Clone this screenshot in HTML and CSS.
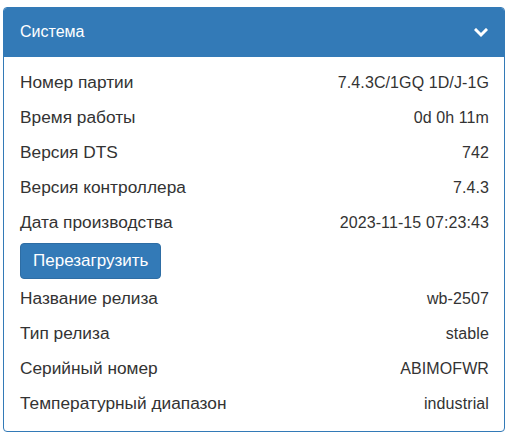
FILE: index.html
```html
<!DOCTYPE html>
<html>
<head>
<meta charset="utf-8">
<link rel="stylesheet" href="styles.css">
</head>
<body>
<div class="page">
  <div class="panel">
    <div class="panel-heading">
      <span class="panel-title">Система</span>
      <svg class="chevron" width="14" height="10" viewBox="0 0 14 10"><path d="M2 2 L7 7 L12 2" fill="none" stroke="#fff" stroke-width="3" stroke-linecap="square"/></svg>
    </div>
    <div class="panel-body">
      <div class="row"><span class="label">Номер партии</span><span class="value">7.4.3C/1GQ 1D/J-1G</span></div>
      <div class="row"><span class="label">Время работы</span><span class="value">0d 0h 11m</span></div>
      <div class="row"><span class="label">Версия DTS</span><span class="value">742</span></div>
      <div class="row"><span class="label">Версия контроллера</span><span class="value">7.4.3</span></div>
      <div class="row"><span class="label">Дата производства</span><span class="value">2023-11-15 07:23:43</span></div>
      <div class="btn-row"><button class="btn">Перезагрузить</button></div>
      <div class="row"><span class="label">Название релиза</span><span class="value">wb-2507</span></div>
      <div class="row"><span class="label">Тип релиза</span><span class="value">stable</span></div>
      <div class="row"><span class="label">Серийный номер</span><span class="value">ABIMOFWR</span></div>
      <div class="row"><span class="label">Температурный диапазон</span><span class="value">industrial</span></div>
    </div>
  </div>
</div>
</body>
</html>
```
FILE: styles.css
```css
html, body {
  margin: 0;
  padding: 0;
  background: #fff;
}
body {
  font-family: "Liberation Sans", Arial, sans-serif;
  font-size: 16px;
  color: #333;
}
.page {
  padding: 7px 5px 0 3px;
}
.panel {
  border: 1px solid #337ab7;
  border-radius: 4px;
  overflow: hidden;
}
.panel-heading {
  background: #337ab7;
  color: #fff;
  height: 49px;
  display: flex;
  align-items: center;
  justify-content: space-between;
  padding: 0 16px 0 16px;
}
.panel-title {
  font-size: 16px;
  margin-top: -1px;
}
.panel-body {
  padding: 8px 15px 10px 16px;
}
.row {
  display: flex;
  justify-content: space-between;
  align-items: center;
  height: 35px;
}
.label {
  font-size: 17.3px;
}
.value {
  font-size: 16px;
  letter-spacing: 0.1px;
}
.btn-row {
  padding: 3px 0 2px 0;
}
.btn {
  font-family: "Liberation Sans", Arial, sans-serif;
  font-size: 17px;
  color: #fff;
  background: #337ab7;
  border: 1px solid #2e6da4;
  border-radius: 4px;
  height: 36px;
  padding: 0 12px;
  width: 141px;
}
```
